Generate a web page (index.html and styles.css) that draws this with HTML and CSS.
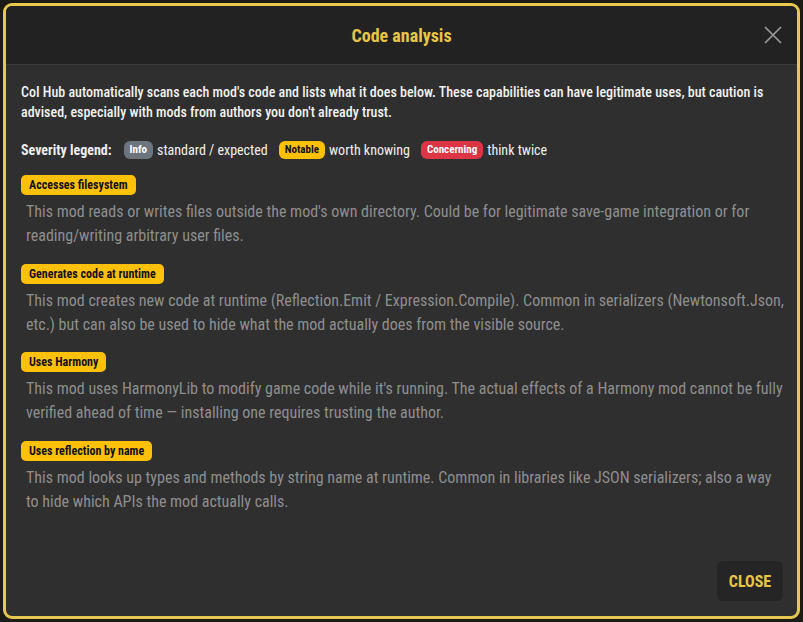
FILE: index.html
```html
<!doctype html>
<html lang="en">
<head>
  <meta charset="utf-8" />
  <meta name="viewport" content="width=device-width,initial-scale=1" />
  <title>Code analysis</title>
  <link rel="stylesheet" href="styles.css">
</head>
<body>
  <div class="dialog">
    <div class="dlg-head">
      <h2 class="dlg-title">Code analysis</h2>
      <button class="dlg-x" aria-label="Close">
        <svg viewBox="0 0 20 20" width="20" height="20"><path d="M2 2L18 18M18 2L2 18" stroke="currentColor" stroke-width="1.7" fill="none"/></svg>
      </button>
    </div>

    <div class="dlg-body">
      <p class="intro">CoI Hub automatically scans each mod's code and lists what it does below. These capabilities can have legitimate uses, but caution is advised, especially with mods from authors you don't already trust.</p>

      <div class="legend">
        <b>Severity legend:</b>
        <span class="sev sev-info">Info</span><span class="legend-txt">standard / expected</span>
        <span class="sev sev-notable">Notable</span><span class="legend-txt">worth knowing</span>
        <span class="sev sev-bad">Concerning</span><span class="legend-txt">think twice</span>
      </div>

      <div class="cap">
        <span class="tag">Accesses filesystem</span>
        <p class="cap-desc">This mod reads or writes files outside the mod's own directory. Could be for legitimate save-game integration or for reading/writing arbitrary user files.</p>
      </div>
      <div class="cap">
        <span class="tag">Generates code at runtime</span>
        <p class="cap-desc">This mod creates new code at runtime (Reflection.Emit / Expression.Compile). Common in serializers (Newtonsoft.Json, etc.) but can also be used to hide what the mod actually does from the visible source.</p>
      </div>
      <div class="cap">
        <span class="tag">Uses Harmony</span>
        <p class="cap-desc">This mod uses HarmonyLib to modify game code while it's running. The actual effects of a Harmony mod cannot be fully verified ahead of time — installing one requires trusting the author.</p>
      </div>
      <div class="cap">
        <span class="tag">Uses reflection by name</span>
        <p class="cap-desc">This mod looks up types and methods by string name at runtime. Common in libraries like JSON serializers; also a way to hide which APIs the mod actually calls.</p>
      </div>
    </div>

    <div class="dlg-foot">
      <button class="btn-close">CLOSE</button>
    </div>
  </div>
</body>
</html>
```

FILE: styles.css
```css
html, body { margin:0; padding:0; height:100%; background:#1c1b16; overflow:hidden;
  font-family:"Roboto","Liberation Sans",sans-serif; font-stretch:condensed; color:#eee; }

.dialog{
  box-sizing:border-box; margin:3px; height:calc(100% - 6px);
  display:flex; flex-direction:column;
  background:#2f2f2f; border:3px solid #e6c84f; border-radius:9px; overflow:hidden;
}

.dlg-head{
  height:58px; flex:none; background:#222; border-bottom:1px solid #3b3b3b;
  display:flex; align-items:center; justify-content:center; position:relative;
}
.dlg-title{ margin:0; font-size:18px; font-weight:700; color:#e8c547; }
.dlg-x{
  position:absolute; right:14px; top:19px; padding:0; border:0; background:none;
  color:#9a9a9a; width:20px; height:20px; display:block;
}
.dlg-x svg{ display:block; }

.dlg-body{ flex:1; padding:17px 10px 0 15px; }
.intro{ margin:0 5px 0 0; font-size:14px; line-height:20px; font-weight:500; color:#f2f2f2; }

.legend{ margin-top:18px; display:flex; align-items:center; font-size:14px; line-height:20px; }
.legend b{ margin-right:12px; }
.legend-txt{ margin:0 11px 0 4px; color:#f0f0f0; }
.sev{ font-size:11px; font-weight:700; line-height:18px; padding:0 6px; border-radius:6px; }
.sev-info{ background:#6c757d; color:#fff; }
.sev-notable{ background:#ffc107; color:#111; }
.sev-bad{ background:#dc3545; color:#fff; }

.cap{ margin-top:15.5px; display:flex; flex-direction:column; align-items:flex-start; }
.legend + .cap{ margin-top:15px; }
.tag{
  background:#ffc107; color:#111; font-size:12px; font-weight:700;
  line-height:20px; padding:0 8px; border-radius:5px;
}
.cap-desc{ margin:5px 0 0; padding-left:5px; font-size:16px; line-height:24px; color:#8e8e8e; }

.dlg-foot{ display:flex; justify-content:flex-end; padding:0 14px 15px; }
.btn-close{
  font-family:inherit; font-stretch:condensed; font-size:16px; font-weight:700; color:#e8c547;
  background:#252525; border:0; border-radius:6px; width:66px; height:40px;
}
```
